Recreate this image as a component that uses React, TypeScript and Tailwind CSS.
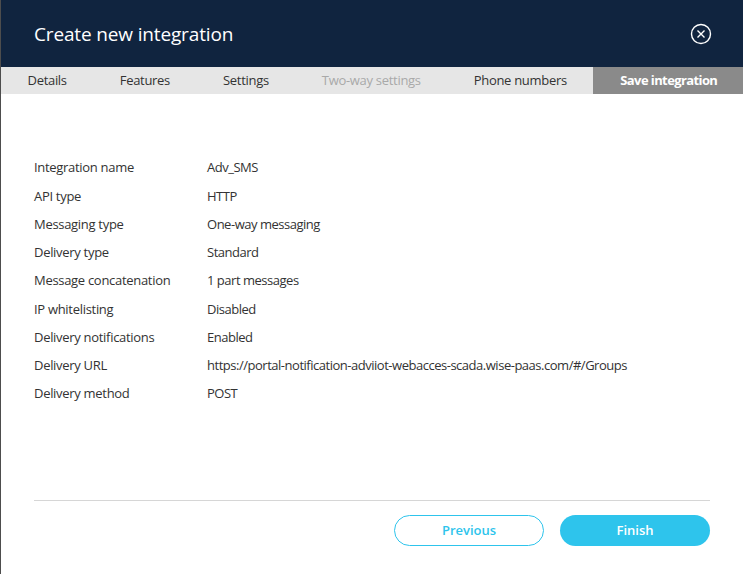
import { useState } from 'react';

const tabs = [
  { label: 'Details' },
  { label: 'Features' },
  { label: 'Settings' },
  { label: 'Two-way settings', disabled: true },
  { label: 'Phone numbers' },
  { label: 'Save integration', active: true },
];

const rows = [
  ['Integration name', 'Adv_SMS'],
  ['API type', 'HTTP'],
  ['Messaging type', 'One-way messaging'],
  ['Delivery type', 'Standard'],
  ['Message concatenation', '1 part messages'],
  ['IP whitelisting', 'Disabled'],
  ['Delivery notifications', 'Enabled'],
  ['Delivery URL', 'https://portal-notification-adviiot-webacces-scada.wise-paas.com/#/Groups'],
  ['Delivery method', 'POST'],
];

const CloseIcon = () => (
  <svg width="22" height="22" viewBox="0 0 22 22" fill="none" stroke="currentColor" strokeWidth="1.4">
    <circle cx="11" cy="11" r="9.5" />
    <path d="M7.5 7.5 L14.5 14.5 M14.5 7.5 L7.5 14.5" />
  </svg>
);

export default function App() {
  const [open, setOpen] = useState(true);

  return (
    <div
      className="flex h-[574px] w-[743px] flex-col border-l border-[#4d4d4d] bg-white"
      style={{ fontFamily: '"Open Sans", sans-serif' }}
    >
      <div className="flex h-[67px] shrink-0 items-center justify-between bg-[#10243f] pl-[33px] pr-[31px]">
        <h1 className="pt-[1px] text-[19px] tracking-[-0.15px] text-white">Create new integration</h1>
        <button className="text-white" onClick={() => setOpen(!open)}>
          <CloseIcon />
        </button>
      </div>

      <div className="flex h-[27px] shrink-0 bg-[#e6e6e6]">
        {tabs.map((tab) => (
          <div
            key={tab.label}
            className={`flex shrink-0 items-center whitespace-nowrap text-[13px] ${
              tab.active
                ? 'ml-auto w-[151px] justify-center bg-[#8a8a8a] font-bold tracking-[-0.6px] text-white'
                : tab.disabled
                  ? 'px-[26.5px] tracking-[-0.3px] text-[#a9a9a9]'
                  : 'px-[26.5px] tracking-[-0.3px] text-[#333]'
            }`}
          >
            {tab.label}
          </div>
        ))}
      </div>

      <div className="flex flex-1 flex-col px-[33px] pt-[60px]">
        <div className="flex flex-col">
          {rows.map(([label, value]) => (
            <div key={label} className="flex h-[28.25px] items-center text-[13px] tracking-[-0.3px] text-[#333]">
              <span className="w-[173px] shrink-0">{label}</span>
              <span className="tracking-[-0.48px]">{value}</span>
            </div>
          ))}
        </div>

        <div className="mt-auto border-t border-[#d6d6d6]" />
        <div className="flex justify-end gap-4 pt-[14px] pb-[28px]">
          <button className="h-[31px] w-[150px] rounded-full border border-[#2ec4ec] text-[13px] font-semibold text-[#2ec4ec]">
            Previous
          </button>
          <button className="h-[31px] w-[150px] rounded-full bg-[#2ec4ec] text-[13px] font-semibold text-white">
            Finish
          </button>
        </div>
      </div>
    </div>
  );
}
